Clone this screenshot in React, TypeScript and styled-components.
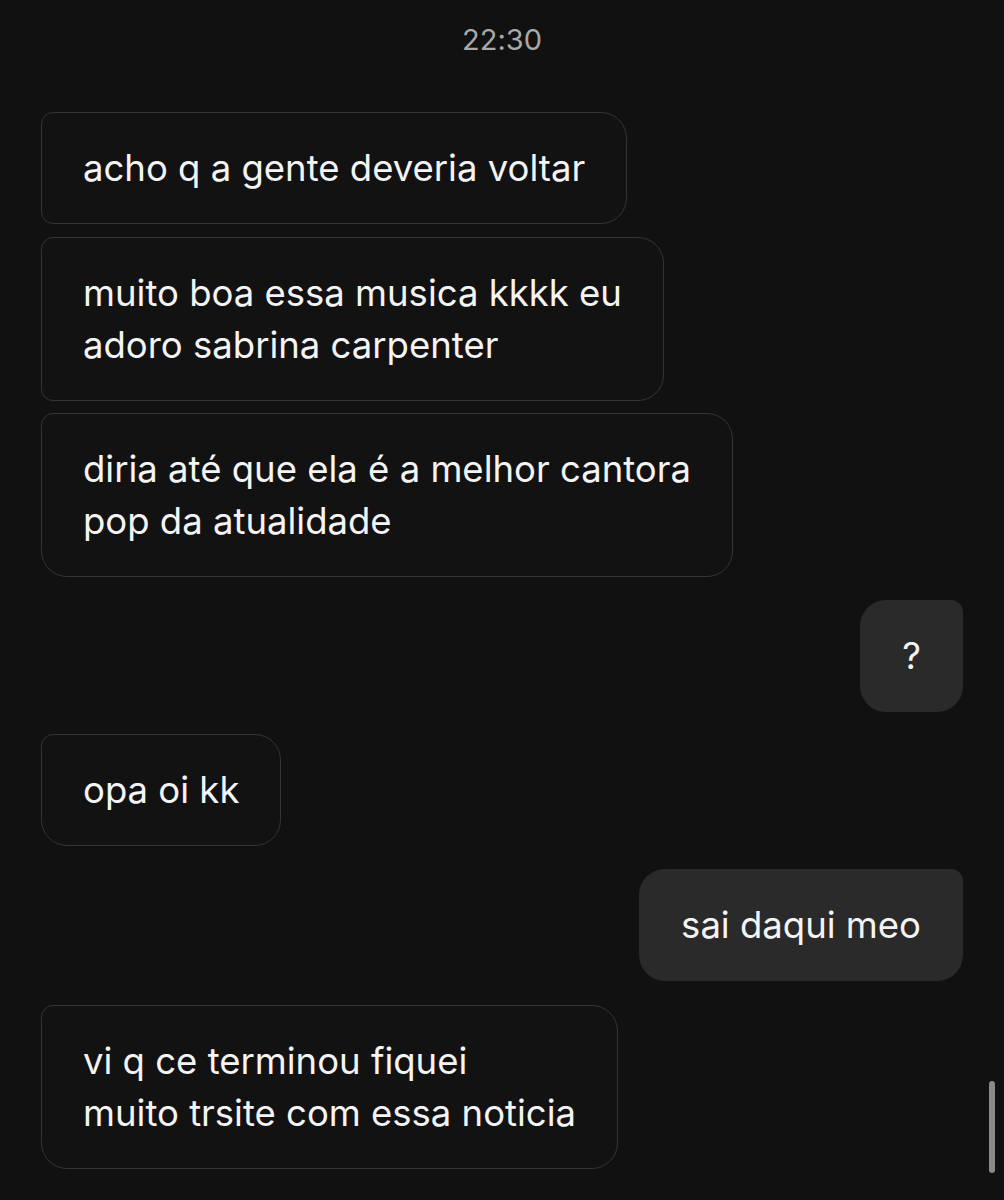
import React from 'react'
import styled, { createGlobalStyle, css } from 'styled-components'

const GlobalStyle = createGlobalStyle`
  html, body {
    margin: 0;
    padding: 0;
    background: #111111;
  }
  body {
    font-family: Inter, "Noto Sans", sans-serif;
    font-feature-settings: "liga" 0, "calt" 0;
    -webkit-font-smoothing: antialiased;
  }
`

const Screen = styled.div`
  position: relative;
  width: 1004px;
  height: 1200px;
  overflow: hidden;
  background: #111111;
  box-sizing: border-box;
  padding: 23px 41px 0;
  display: flex;
  flex-direction: column;
`

const Time = styled.div`
  align-self: center;
  color: #a9a9a9;
  font-size: 29px;
  line-height: 34px;
  margin-bottom: 55px;
`

type Side = 'in' | 'out'
type Pos = 'first' | 'middle' | 'last' | 'single'

const Bubble = styled.div<{ $side: Side; $pos: Pos; $gap: number }>`
  box-sizing: border-box;
  width: fit-content;
  margin-top: ${({ $gap }) => $gap}px;
  padding: 29px 41px;
  font-size: 36.5px;
  line-height: 52px;
  letter-spacing: 0;
  color: #f4f4f4;
  white-space: pre-line;
  border: 1px solid transparent;

  ${({ $side, $pos }) =>
    $side === 'in'
      ? css`
          align-self: flex-start;
          background: #121212;
          border-color: #343434;
          border-radius: 12px 26px 26px ${$pos === 'last' || $pos === 'single' ? 26 : 12}px;
        `
      : css`
          align-self: flex-end;
          background: #2a2a2a;
          border-radius: 26px 12px 26px 26px;
        `}
`

const Scrollbar = styled.div`
  position: absolute;
  right: 9px;
  top: 1081px;
  width: 6px;
  height: 92px;
  border-radius: 3px;
  background: #8a8a8a;
`

const messages: { side: Side; pos: Pos; gap: number; text: string }[] = [
  { side: 'in', pos: 'first', gap: 0, text: 'acho q a gente deveria voltar' },
  { side: 'in', pos: 'middle', gap: 13, text: 'muito boa essa musica kkkk eu\nadoro sabrina carpenter' },
  { side: 'in', pos: 'last', gap: 12, text: 'diria até que ela é a melhor cantora\npop da atualidade' },
  { side: 'out', pos: 'single', gap: 23, text: '?' },
  { side: 'in', pos: 'single', gap: 22, text: 'opa oi kk' },
  { side: 'out', pos: 'single', gap: 23, text: 'sai daqui meo' },
  { side: 'in', pos: 'single', gap: 24, text: 'vi q ce terminou fiquei\nmuito trsite com essa noticia' },
]

export default function App() {
  return (
    <>
      <GlobalStyle />
      <Screen>
        <Time>22:30</Time>
        {messages.map((m, i) => (
          <Bubble key={i} $side={m.side} $pos={m.pos} $gap={m.gap}>
            {m.text}
          </Bubble>
        ))}
        <Scrollbar />
      </Screen>
    </>
  )
}
